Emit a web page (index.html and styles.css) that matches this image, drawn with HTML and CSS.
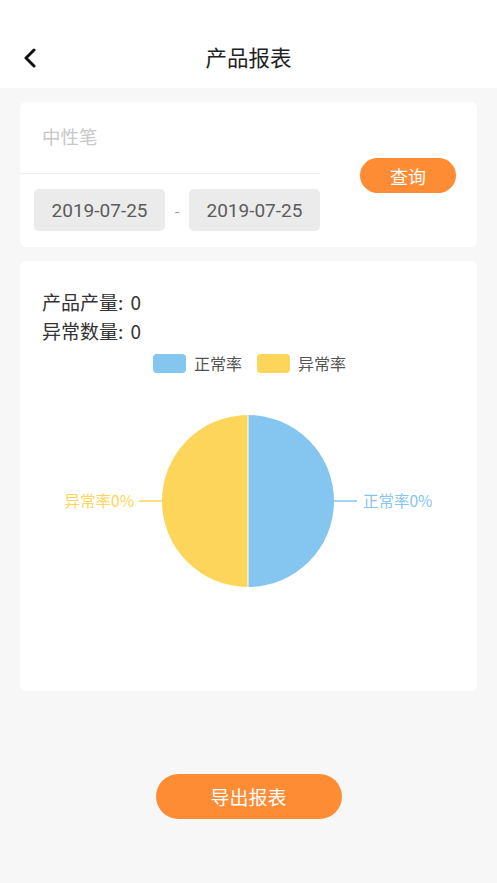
FILE: index.html
```html
<!DOCTYPE html>
<html lang="zh-CN">
<head>
    <meta charset="UTF-8">
    <meta name="viewport" content="width=device-width, initial-scale=1.0">
    <title>产品报表</title>
    <link rel="stylesheet" href="styles.css">
</head>
<body>
    <div class="header">
        <svg class="back" width="16" height="20" viewBox="0 0 16 20">
            <polyline points="12,2 4,10 12,18" fill="none" stroke="#111" stroke-width="3" stroke-linecap="round" stroke-linejoin="round"/>
        </svg>
        <div class="title">产品报表</div>
    </div>

    <div class="main">
        <div class="card search-card">
            <div class="search-left">
                <div class="input-row">
                    <input type="text" class="name-input" placeholder="中性笔">
                </div>
                <div class="date-row">
                    <div class="date-box">2019-07-25</div>
                    <span class="date-sep">-</span>
                    <div class="date-box">2019-07-25</div>
                </div>
            </div>
            <button class="query-btn">查询</button>
        </div>

        <div class="card chart-card">
            <div class="stat">产品产量: <span class="stat-value">0</span></div>
            <div class="stat">异常数量: <span class="stat-value">0</span></div>
            <div class="legend">
                <span class="swatch blue"></span><span class="legend-text">正常率</span>
                <span class="swatch yellow"></span><span class="legend-text">异常率</span>
            </div>
            <svg class="pie" width="457" height="318" viewBox="0 0 457 318">
                <path d="M228 42 A86 86 0 0 1 228 214 Z" fill="#85c6f0"/>
                <path d="M228 214 A86 86 0 0 1 228 42 Z" fill="#fdd55a"/>
                <line x1="228" y1="42" x2="228" y2="214" stroke="#fff" stroke-width="1"/>
                <line x1="314" y1="128" x2="337" y2="128" stroke="#85c6f0" stroke-width="1.5"/>
                <line x1="119" y1="128" x2="142" y2="128" stroke="#fdd55a" stroke-width="1.5"/>
                <text x="343" y="134" class="pie-label" fill="#85c6f0">正常率0%</text>
                <text x="114" y="134" class="pie-label" fill="#fdd55a" text-anchor="end">异常率0%</text>
            </svg>
        </div>

        <div class="export-wrap">
            <button class="export-btn">导出报表</button>
        </div>
    </div>
</body>
</html>
```

FILE: styles.css
```css
body {
    margin: 0;
    background-color: #f7f7f7;
    font-family: "Noto Sans CJK SC", "Noto Sans", sans-serif;
    color: #333;
}
.header {
    height: 88px;
    background: white;
    display: flex;
    align-items: flex-end;
    justify-content: center;
    padding-bottom: 17px;
    box-sizing: border-box;
    position: relative;
}
.back {
    position: absolute;
    left: 22px;
    top: 48px;
}
.title {
    font-size: 21.5px;
    line-height: 28px;
    color: #222;
}
.main {
    padding: 14px 20px 0;
}
.card {
    background: white;
    border-radius: 6px;
}
.search-card {
    display: flex;
    align-items: center;
    height: 145px;
}
.search-left {
    width: 300px;
    align-self: flex-start;
}
.input-row {
    height: 71px;
    border-bottom: 1px solid #eee;
    display: flex;
    align-items: center;
}
.name-input {
    border: none;
    outline: none;
    background: transparent;
    font-family: inherit;
    font-size: 18.5px;
    padding: 0 0 0 22px;
    margin-bottom: 3px;
    width: 260px;
}
.name-input::placeholder {
    color: #c8c8c8;
}
.date-row {
    display: flex;
    align-items: center;
    padding: 15px 0 0 14px;
}
.date-box {
    width: 132px;
    height: 42px;
    background: #ebebeb;
    border-radius: 5px;
    display: flex;
    align-items: center;
    justify-content: center;
    font-size: 19px;
    color: #5c5c5c;
    font-family: Roboto, "Noto Sans", sans-serif;
}
.date-sep {
    width: 24px;
    text-align: center;
    color: #999;
    font-size: 15px;
}
.query-btn {
    margin-left: 40px;
    width: 96px;
    height: 35px;
    border: none;
    border-radius: 18px;
    background: #fe8c35;
    color: white;
    font-family: inherit;
    font-size: 18px;
    margin-top: 2px;
}
.chart-card {
    margin-top: 14px;
    height: 430px;
    padding-top: 26px;
    box-sizing: border-box;
}
.stat {
    font-size: 19px;
    line-height: 29px;
    padding-left: 22px;
    color: #333;
}
.stat-value {
    margin-left: 3px;
}
.legend {
    display: flex;
    align-items: center;
    justify-content: center;
    height: 20px;
    margin-top: 8px;
    padding-left: 2px;
}
.swatch {
    width: 33px;
    height: 19px;
    border-radius: 4px;
    margin-right: 8px;
}
.swatch.blue {
    background: #85c6f0;
}
.swatch.yellow {
    background: #fdd55a;
    margin-left: 15px;
}
.legend-text {
    font-size: 16px;
    color: #555;
}
.pie {
    display: block;
}
.pie-label {
    font-size: 15.5px;
    font-family: "Noto Sans CJK SC", sans-serif;
}
.export-wrap {
    display: flex;
    justify-content: center;
    margin-top: 83px;
}
.export-btn {
    width: 186px;
    height: 45px;
    border: none;
    border-radius: 23px;
    background: #fe8c35;
    color: white;
    font-family: inherit;
    font-size: 19px;
}
```
